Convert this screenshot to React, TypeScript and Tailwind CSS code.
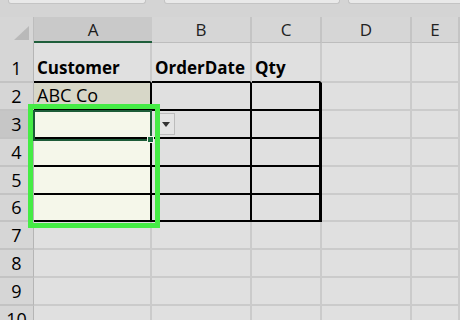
import React from 'react';

const COLS = [
  { key: 'A', w: 'w-[118px]' },
  { key: 'B', w: 'w-[100px]' },
  { key: 'C', w: 'w-[70px]' },
  { key: 'D', w: 'w-[90px]' },
  { key: 'E', w: 'w-[48px]' },
];

type Row = { n: number; h: string; cells: string[] };

const ROWS: Row[] = [
  { n: 1, h: 'h-[40px]', cells: ['Customer', 'OrderDate', 'Qty', '', ''] },
  { n: 2, h: 'h-[28px]', cells: ['ABC Co', '', '', '', ''] },
  { n: 3, h: 'h-[28px]', cells: ['', '', '', '', ''] },
  { n: 4, h: 'h-[28px]', cells: ['', '', '', '', ''] },
  { n: 5, h: 'h-[28px]', cells: ['', '', '', '', ''] },
  { n: 6, h: 'h-[27px]', cells: ['', '', '', '', ''] },
  { n: 7, h: 'h-[28px]', cells: ['', '', '', '', ''] },
  { n: 8, h: 'h-[28px]', cells: ['', '', '', '', ''] },
  { n: 9, h: 'h-[28px]', cells: ['', '', '', '', ''] },
  { n: 10, h: 'h-[28px]', cells: ['', '', '', '', ''] },
];

function cellClass(row: number, col: number) {
  const inTable = row >= 2 && row <= 6 && col <= 2;
  const header = row === 1 && col <= 2;
  let bg = 'bg-[#e0e0e0]';
  if (row === 2 && col === 0) bg = 'bg-[#d7d7c8]';
  if (row >= 3 && row <= 6 && col === 0) bg = 'bg-[#f5f7ea]';
  const bottom = inTable || header ? 'border-b-2 border-b-black' : 'border-b-2 border-b-[#cbcbcb]';
  let right = 'border-r-2 border-r-[#cbcbcb]';
  if (inTable) right = col === 2 ? 'border-r-[3px] border-r-black' : 'border-r-2 border-r-black';
  return `${bg} ${bottom} ${right}`;
}

export default function App() {
  return (
    <div className="relative h-[320px] w-[460px] overflow-hidden bg-[#e0e0e0] font-['Open_Sans','Liberation_Sans',sans-serif] text-black">
      {/* formula bar remnants */}
      <div className="flex h-[17px] bg-[#d4d4d4]">
        <div className="ml-[8px] h-[4px] w-[138px] rounded-b-[3px] border border-t-0 border-[#c4c4c4] bg-[#e9e9e9]"></div>
        <div className="ml-[18px] h-[4px] w-[176px] rounded-b-[3px] border border-t-0 border-[#c4c4c4] bg-[#e9e9e9]"></div>
        <div className="ml-[8px] h-[4px] flex-1 rounded-bl-[3px] border border-t-0 border-r-0 border-[#c4c4c4] bg-[#e9e9e9]"></div>
      </div>

      {/* column headers */}
      <div className="flex h-[26px] bg-[#d6d6d6]">
        <div className="flex w-[34px] items-end justify-end border-r border-[#bdbdbd] pb-[3px] pr-[4px]">
          <svg width="15" height="14" viewBox="0 0 15 14">
            <polygon points="15,0 15,14 0,14" fill="#b9b9b9" />
          </svg>
        </div>
        {COLS.map((c, i) => (
          <div
            key={c.key}
            className={`${c.w} flex items-center justify-center text-[17px] leading-none ${
              i === 0
                ? 'border-b-2 border-b-[#1f5e3b] bg-[#c9c9c9] text-[#1a1a1a]'
                : 'border-b border-r-2 border-b-[#bdbdbd] border-r-[#c4c4c4] text-[#222]'
            }`}
          >
            {c.key}
          </div>
        ))}
      </div>

      {/* rows */}
      {ROWS.map((r) => (
        <div key={r.n} className={`flex ${r.h}`}>
          <div
            className={`flex w-[34px] items-end justify-center border-b-2 border-r border-b-[#c3c3c3] border-r-[#b5b5b5] pb-[4px] text-[18px] leading-none ${
              r.n === 3 ? 'bg-[#c6c6c6]' : 'bg-[#d6d6d6]'
            }`}
          >
            {r.n}
          </div>
          {COLS.map((c, ci) => (
            <div
              key={c.key}
              className={`${c.w} flex items-end overflow-visible whitespace-nowrap px-[3px] pb-[5px] leading-none ${cellClass(r.n, ci)} ${
                r.n === 1 ? 'text-[17px] font-bold' : 'text-[18px]'
              }`}
            >
              {r.cells[ci]}
            </div>
          ))}
        </div>
      ))}

      {/* dropdown button next to active cell */}
      <div className="absolute left-[157px] top-[113px] flex h-[22px] w-[18px] items-center justify-center border border-[#bcbcbc] bg-[#e4e4e4]">
        <svg width="8" height="5" viewBox="0 0 8 5">
          <polygon points="0,0 8,0 4,5" fill="#333" />
        </svg>
      </div>

      {/* active cell border + fill handle */}
      <div className="absolute left-[33px] top-[110px] h-[31px] w-[119px] border-2 border-[#1d5c38]"></div>
      <div className="absolute left-[147px] top-[136px] h-[7px] w-[7px] border border-[#f5f7ea] bg-[#1d6b40]"></div>

      {/* green highlight */}
      <div className="absolute left-[28px] top-[104px] h-[124px] w-[132px] border-[5px] border-[#45ec45]"></div>
    </div>
  );
}
